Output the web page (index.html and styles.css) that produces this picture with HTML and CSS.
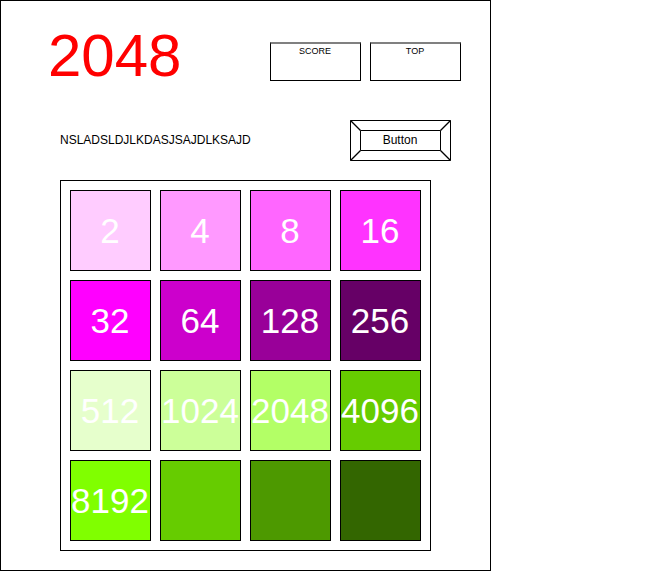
FILE: index.html
```html
<!DOCTYPE html>
<html lang="en">
<head>
<meta charset="utf-8">
<title>2048</title>
<link rel="stylesheet" href="styles.css">
</head>
<body>
<main class="game">
  <header class="header">
    <h1 class="title">2048</h1>
    <div class="scores">
      <div class="score">SCORE</div>
      <div class="score">TOP</div>
    </div>
  </header>
  <div class="toolbar">
    <p class="message">NSLADSLDJLKDASJSAJDLKSAJD</p>
    <button class="button" type="button"><svg class="bevel" viewBox="0 0 101 41" aria-hidden="true"><path d="M.5 .5H100.500V40.500H.5ZM10.500 10.500H90.500V30.500H10.500Z"/><path class="corners" d="M.5 .5L10.500 10.500M100.500 .5L90.500 10.500M100.500 40.500L90.500 30.500M.5 40.500L10.500 30.500"/></svg>Button</button>
  </div>
  <section class="board" aria-label="Board">
    <div class="tile t2">2</div>
    <div class="tile t4">4</div>
    <div class="tile t8">8</div>
    <div class="tile t16">16</div>
    <div class="tile t32">32</div>
    <div class="tile t64">64</div>
    <div class="tile t128">128</div>
    <div class="tile t256">256</div>
    <div class="tile t512">512</div>
    <div class="tile t1024">1024</div>
    <div class="tile t2048">2048</div>
    <div class="tile t4096">4096</div>
    <div class="tile t8192">8192</div>
    <div class="tile t16384"></div>
    <div class="tile t32768"></div>
    <div class="tile t65536"></div>
  </section>
</main>
</body>
</html>
```
FILE: styles.css
```css
* { box-sizing: border-box; }
body {
  margin: 0;
  background: #fff;
  color: #000;
  font-family: "Liberation Sans", Arial, sans-serif;
  font-size: 12px;
}
.game {
  width: fit-content;
  padding: 30px 29px 19px 47px;
  border: 1px solid #000;
}
.header {
  display: flex;
  justify-content: space-between;
  align-items: flex-start;
  height: 60px;
}
.title {
  margin: 0;
  color: #f00;
  font-size: 60px;
  font-weight: 400;
  line-height: 50px;
}
.scores {
  display: flex;
  gap: 9px;
  margin-top: 11px;
}
.score {
  width: 91px;
  height: 39px;
  padding: 2px 1px 0 0;
  border: 1px solid #000;
  border-top: 2px solid #808080;
  font-size: 9px;
  line-height: 11px;
  text-align: center;
}
.toolbar {
  display: flex;
  justify-content: space-between;
  align-items: center;
  margin: 29px 10px 19px 12px;
}
.message {
  margin: 0;
  padding-bottom: 2px;
}
.button {
  position: relative;
  width: 101px;
  height: 41px;
  padding: 0 1px 2px 0;
  border: 0;
  background: #fff;
  color: inherit;
  font: inherit;
}
.bevel {
  position: absolute;
  inset: 0;
  width: 100%;
  height: 100%;
  fill: none;
  stroke: #000;
}
.corners { stroke-width: 1.4; }
.board {
  display: grid;
  grid-template-columns: repeat(4, 81px);
  gap: 9px;
  width: fit-content;
  margin: 0 30px 0 12px;
  padding: 9px;
  border: 1px solid #000;
}
.tile {
  display: flex;
  justify-content: center;
  align-items: center;
  height: 81px;
  padding-right: 1px;
  border: 1px solid #000;
  color: #fff;
  font-size: 35px;
}
.t2 { background: #fcf; }
.t4 { background: #f9f; }
.t8 { background: #f6f; }
.t16 { background: #f3f; }
.t32 { background: #f0f; }
.t64 { background: #c0c; }
.t128 { background: #909; }
.t256 { background: #606; }
.t512 { background: #e6ffcc; }
.t1024 { background: #cf9; }
.t2048 { background: #b3ff66; }
.t4096 { background: #6c0; }
.t8192 { background: #80ff00; }
.t16384 { background: #6c0; }
.t32768 { background: #4d9900; }
.t65536 { background: #360; }
```
